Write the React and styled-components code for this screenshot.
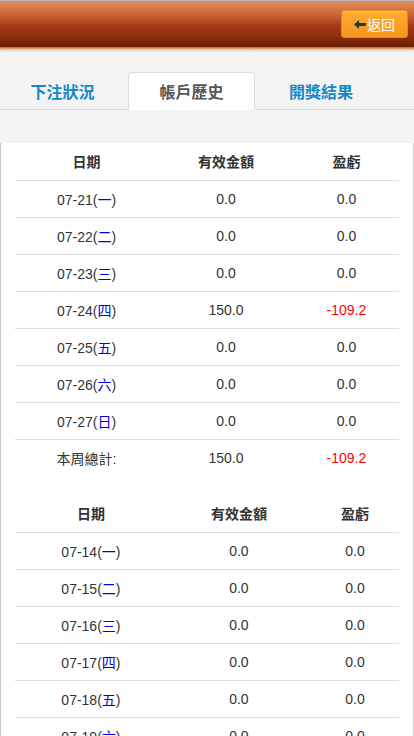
import React from "react";
import styled, { createGlobalStyle } from "styled-components";

const Global = createGlobalStyle`
  html, body { margin: 0; padding: 0; background: #f3f3f3; }
  body { font-family: "Liberation Sans", "Noto Sans CJK TC", sans-serif; color: #333; }
  * { box-sizing: border-box; }
`;

const Page = styled.div`
  width: 414px;
  min-height: 736px;
  display: flex;
  flex-direction: column;
  background: #f3f3f3;
`;

const Header = styled.header`
  height: 50px;
  border-top: 1px solid #b9b9b9;
  background: linear-gradient(to bottom, #e58c5c 0%, #cf6a3a 25%, #a43c14 50%, #8a2c0c 75%, #6a1f06 94%, #d4824f 95%, #e9a878 98%, #f4d8c4 100%);
  box-shadow: 0 1px 2px rgba(0,0,0,0.12);
  display: flex;
  align-items: center;
  justify-content: flex-end;
  padding: 0 6px 1px 0;
`;

const BackButton = styled.button`
  width: 67px;
  height: 28px;
  margin-top: -2px;
  border: 1px solid #e38c14;
  border-radius: 3px;
  background: linear-gradient(to bottom, #fdac34, #f7961c);
  color: #fff;
  font-family: "Noto Sans CJK TC", sans-serif;
  font-size: 14px;
  display: flex;
  align-items: center;
  justify-content: center;
  gap: 1px;
  padding: 0;
  box-shadow: inset 0 1px 0 rgba(255,255,255,0.25);
`;

const TabBar = styled.nav`
  display: flex;
  align-items: flex-end;
  height: 60px;
  padding-left: 1px;
  border-bottom: 1px solid #dcdcdc;
`;

const Tab = styled.div`
  width: ${(p) => p.$w}px;
  height: 38px;
  margin-bottom: -1px;
  padding-right: ${(p) => p.$shift || 0}px;
  display: flex;
  align-items: center;
  justify-content: center;
  font-family: "Noto Sans CJK TC", sans-serif;
  font-size: 16px;
  font-weight: bold;
  color: ${(p) => (p.$active ? "#555" : "#1588c8")};
  background: ${(p) => (p.$active ? "#fff" : "transparent")};
  border: 1px solid ${(p) => (p.$active ? "#dcdcdc" : "transparent")};
  border-bottom-color: ${(p) => (p.$active ? "#fff" : "transparent")};
  border-radius: 4px 4px 0 0;
`;

const Spacer = styled.div`
  height: 33px;
`;

const Panel = styled.main`
  flex: 1;
  background: #fff;
  border-left: 1px solid #c8c8c8;
  border-right: 1px solid #c8c8c8;
  padding: 0 14px 20px;
  display: flex;
  flex-direction: column;
  gap: 19px;
`;

const Table = styled.table`
  width: 100%;
  border-collapse: collapse;
  font-size: 14px;
  color: #333;
`;

const Th = styled.th`
  height: 37px;
  font-family: "Noto Sans CJK TC", sans-serif;
  font-weight: bold;
  font-size: 14px;
  text-align: center;
  padding: 0 8px;
  color: #333;
`;

const Td = styled.td`
  height: 37px;
  text-align: center;
  padding: 0 8px;
  border-top: 1px solid #dcdcdc;
  color: ${(p) => (p.$neg ? "#ff0000" : "#333")};
  white-space: nowrap;
`;

const Day = styled.span`
  color: #0000ee;
`;

const weekdays = ["一", "二", "三", "四", "五", "六", "日"];

const week1 = [
  ["07-21", "0.0", "0.0"],
  ["07-22", "0.0", "0.0"],
  ["07-23", "0.0", "0.0"],
  ["07-24", "150.0", "-109.2"],
  ["07-25", "0.0", "0.0"],
  ["07-26", "0.0", "0.0"],
  ["07-27", "0.0", "0.0"],
];

const week2 = [
  ["07-14", "0.0", "0.0"],
  ["07-15", "0.0", "0.0"],
  ["07-16", "0.0", "0.0"],
  ["07-17", "0.0", "0.0"],
  ["07-18", "0.0", "0.0"],
  ["07-19", "0.0", "0.0"],
  ["07-20", "0.0", "0.0"],
];

function WeekTable({ rows, total }) {
  return (
    <Table>
      <thead>
        <tr>
          <Th>日期</Th>
          <Th>有效金額</Th>
          <Th>盈虧</Th>
        </tr>
      </thead>
      <tbody>
        {rows.map((r, i) => (
          <tr key={r[0]}>
            <Td>
              {r[0]}(<Day>{weekdays[i]}</Day>)
            </Td>
            <Td>{r[1]}</Td>
            <Td $neg={r[2].startsWith("-")}>{r[2]}</Td>
          </tr>
        ))}
        {total && (
          <tr>
            <Td>本周總計:</Td>
            <Td>{total[0]}</Td>
            <Td $neg={total[1].startsWith("-")}>{total[1]}</Td>
          </tr>
        )}
      </tbody>
    </Table>
  );
}

function ArrowLeft() {
  return (
    <svg width="12" height="11" viewBox="0 0 12 11">
      <path d="M0 5.5 L5 1 L5 4 L12 4 L12 7 L5 7 L5 10 Z" fill="#333" />
    </svg>
  );
}

export default function App() {
  return (
    <Page>
      <Global />
      <Header>
        <BackButton>
          <ArrowLeft />
          返回
        </BackButton>
      </Header>
      <TabBar>
        <Tab $w={127} $shift={4}>下注狀況</Tab>
        <Tab $w={127} $active>帳戶歷史</Tab>
        <Tab $w={132}>開獎結果</Tab>
      </TabBar>
      <Spacer />
      <Panel>
        <WeekTable rows={week1} total={["150.0", "-109.2"]} />
        <WeekTable rows={week2} total={["0.0", "0.0"]} />
      </Panel>
    </Page>
  );
}
